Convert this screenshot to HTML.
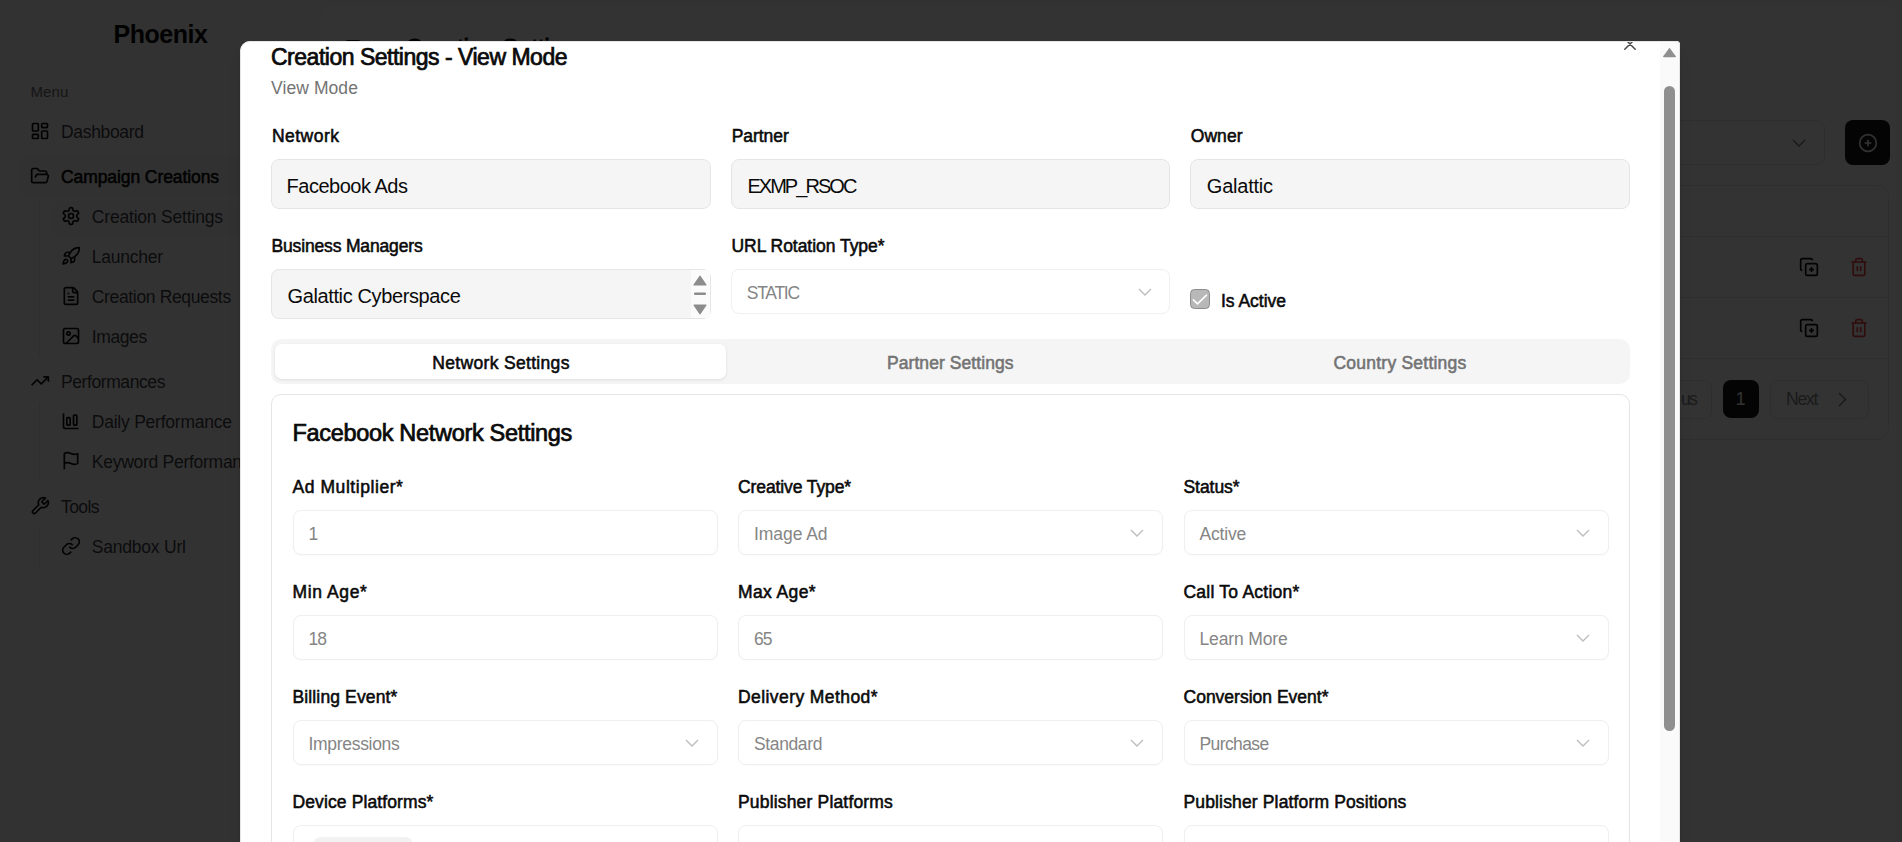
<!DOCTYPE html>
<html><head><meta charset="utf-8">
<style>
*{box-sizing:border-box;margin:0;padding:0}
html,body{width:1902px;height:842px;overflow:hidden;background:#fafafa;font-family:"Liberation Sans",sans-serif}
.t{position:absolute;white-space:nowrap;line-height:1}
.abs{position:absolute}
#bg{position:absolute;left:0;top:0;width:1902px;height:842px}
#overlay{position:absolute;left:0;top:0;width:1902px;height:842px;background:rgba(0,0,0,0.8)}
#modal{position:absolute;left:240px;top:41px;width:1440px;height:830px;background:#fff;box-shadow:0 10px 15px -3px rgba(0,0,0,.1),0 4px 6px -4px rgba(0,0,0,.1);border-radius:10px 4px 0 0;overflow:hidden}
#modal .brd{position:absolute;left:0;top:0;width:1440px;height:830px;border:1px solid #e5e5e5;border-radius:10px 4px 0 0;pointer-events:none}
.inp{position:absolute;border:1px solid #e5e5e5;border-radius:8px;background:#f5f5f5}
.sel{position:absolute;border:1px solid #f0f0f0;border-radius:8px;background:#fff}
.cin{position:absolute;border:1px solid #efefef;border-radius:8px;background:#fff;box-shadow:0 1px 2px rgba(0,0,0,.025)}
svg{display:block}
</style></head><body>
<div id="bg">
  <!-- main inset card -->
  <div class="abs" style="left:320px;top:5px;width:1577px;height:860px;background:#fff;border-radius:12px;box-shadow:0 1px 2px rgba(0,0,0,.08)"></div>
  <!-- header icon + separator -->
  <div class="abs" style="left:345px;top:40px;width:16px;height:16px;border:2px solid #0a0a0a;border-radius:3px"></div>
  <div class="abs" style="left:380px;top:38px;width:1px;height:20px;background:#e5e5e5"></div>
  <!-- sidebar active highlight -->
  <div class="abs" style="left:20px;top:156px;width:280px;height:40px;background:#f4f4f5;border-radius:8px"></div>
  <div class="abs" style="left:39px;top:198px;width:1px;height:158px;background:#e4e4e7"></div>
  <div class="abs" style="left:52px;top:201px;width:250px;height:36px;background:#f4f4f5;border-radius:8px"></div>
  <div class="abs" style="left:39px;top:403px;width:1px;height:78px;background:#e4e4e7"></div>
  <div class="abs" style="left:39px;top:528px;width:1px;height:38px;background:#e4e4e7"></div>
  <!-- sidebar icons -->
  <svg class="abs" style="left:30px;top:121px" width="20" height="20" viewBox="0 0 24 24" fill="none" stroke="#0a0a0a" stroke-width="2" stroke-linejoin="round"><rect x="3" y="3" width="7" height="9" rx="1"/><rect x="14" y="3" width="7" height="5" rx="1"/><rect x="14" y="12" width="7" height="9" rx="1"/><rect x="3" y="16" width="7" height="5" rx="1"/></svg>
  <svg class="abs" style="left:30px;top:166px" width="20" height="20" viewBox="0 0 24 24" fill="none" stroke="#0a0a0a" stroke-width="2" stroke-linejoin="round"><path d="m6 14 1.5-2.9A2 2 0 0 1 9.24 10H20a2 2 0 0 1 1.94 2.5l-1.54 6a2 2 0 0 1-1.95 1.5H4a2 2 0 0 1-2-2V5a2 2 0 0 1 2-2h3.9a2 2 0 0 1 1.69.9l.81 1.2a2 2 0 0 0 1.67.9H18a2 2 0 0 1 2 2v2"/></svg>
  <svg class="abs" style="left:61px;top:206px" width="20" height="20" viewBox="0 0 24 24" fill="none" stroke="#0a0a0a" stroke-width="2" stroke-linejoin="round"><path d="M12.22 2h-.44a2 2 0 0 0-2 2v.18a2 2 0 0 1-1 1.73l-.43.25a2 2 0 0 1-2 0l-.15-.08a2 2 0 0 0-2.73.73l-.22.38a2 2 0 0 0 .73 2.73l.15.1a2 2 0 0 1 1 1.72v.51a2 2 0 0 1-1 1.74l-.15.09a2 2 0 0 0-.73 2.73l.22.38a2 2 0 0 0 2.73.73l.15-.08a2 2 0 0 1 2 0l.43.25a2 2 0 0 1 1 1.73V20a2 2 0 0 0 2 2h.44a2 2 0 0 0 2-2v-.18a2 2 0 0 1 1-1.73l.43-.25a2 2 0 0 1 2 0l.15.08a2 2 0 0 0 2.73-.73l.22-.39a2 2 0 0 0-.73-2.73l-.15-.08a2 2 0 0 1-1-1.74v-.5a2 2 0 0 1 1-1.74l.15-.09a2 2 0 0 0 .73-2.73l-.22-.38a2 2 0 0 0-2.73-.73l-.15.08a2 2 0 0 1-2 0l-.43-.25a2 2 0 0 1-1-1.73V4a2 2 0 0 0-2-2z"/><circle cx="12" cy="12" r="3"/></svg>
  <svg class="abs" style="left:61px;top:246px" width="20" height="20" viewBox="0 0 24 24" fill="none" stroke="#0a0a0a" stroke-width="2" stroke-linejoin="round"><path d="M4.5 16.5c-1.5 1.26-2 5-2 5s3.74-.5 5-2c.71-.84.7-2.13-.09-2.91a2.18 2.18 0 0 0-2.91-.09z"/><path d="m12 15-3-3a22 22 0 0 1 2-3.95A12.88 12.88 0 0 1 22 2c0 2.72-.78 7.5-6 11a22.35 22.35 0 0 1-4 2z"/><path d="M9 12H4s.55-3.03 2-4c1.62-1.08 5 0 5 0"/><path d="M12 15v5s3.03-.55 4-2c1.08-1.62 0-5 0-5"/></svg>
  <svg class="abs" style="left:61px;top:286px" width="20" height="20" viewBox="0 0 24 24" fill="none" stroke="#0a0a0a" stroke-width="2" stroke-linejoin="round"><path d="M15 2H6a2 2 0 0 0-2 2v16a2 2 0 0 0 2 2h12a2 2 0 0 0 2-2V7Z"/><path d="M14 2v4a2 2 0 0 0 2 2h4"/><path d="M10 9H8"/><path d="M16 13H8"/><path d="M16 17H8"/></svg>
  <svg class="abs" style="left:61px;top:326px" width="20" height="20" viewBox="0 0 24 24" fill="none" stroke="#0a0a0a" stroke-width="2" stroke-linejoin="round"><rect width="18" height="18" x="3" y="3" rx="2"/><circle cx="9" cy="9" r="2"/><path d="m21 15-3.09-3.09a2 2 0 0 0-2.82 0L6 21"/></svg>
  <svg class="abs" style="left:30px;top:371px" width="20" height="20" viewBox="0 0 24 24" fill="none" stroke="#0a0a0a" stroke-width="2" stroke-linejoin="round"><polyline points="22 7 13.5 15.5 8.5 10.5 2 17"/><polyline points="16 7 22 7 22 13"/></svg>
  <svg class="abs" style="left:61px;top:411px" width="20" height="20" viewBox="0 0 24 24" fill="none" stroke="#0a0a0a" stroke-width="2" stroke-linejoin="round"><path d="M3 3v16a2 2 0 0 0 2 2h16"/><rect x="15" y="5" width="4" height="12" rx="1"/><rect x="7" y="8" width="4" height="9" rx="1"/></svg>
  <svg class="abs" style="left:61px;top:451px" width="20" height="20" viewBox="0 0 24 24" fill="none" stroke="#0a0a0a" stroke-width="2" stroke-linejoin="round"><path d="M4 15s1-1 4-1 5 2 8 2 4-1 4-1V3s-1 1-4 1-5-2-8-2-4 1-4 1z"/><line x1="4" x2="4" y1="22" y2="15"/></svg>
  <svg class="abs" style="left:30px;top:496px" width="20" height="20" viewBox="0 0 24 24" fill="none" stroke="#0a0a0a" stroke-width="2" stroke-linejoin="round"><path d="M14.7 6.3a1 1 0 0 0 0 1.4l1.6 1.6a1 1 0 0 0 1.4 0l3.77-3.77a6 6 0 0 1-7.94 7.94l-6.91 6.91a2.12 2.12 0 0 1-3-3l6.91-6.91a6 6 0 0 1 7.94-7.94l-3.76 3.76z"/></svg>
  <svg class="abs" style="left:61px;top:536px" width="20" height="20" viewBox="0 0 24 24" fill="none" stroke="#0a0a0a" stroke-width="2" stroke-linejoin="round"><path d="M10 13a5 5 0 0 0 7.54.54l3-3a5 5 0 0 0-7.07-7.07l-1.72 1.71"/><path d="M14 11a5 5 0 0 0-7.54-.54l-3 3a5 5 0 0 0 7.07 7.07l1.71-1.71"/></svg>
  <!-- right strip: select + plus button -->
  <div class="abs" style="left:1500px;top:120px;width:325px;height:45px;border:1px solid #e5e5e5;border-radius:8px;background:#fff"></div>
  <svg class="abs" style="left:1792px;top:139px" width="14" height="8" viewBox="0 0 14 8" fill="none" stroke="#0a0a0a" stroke-opacity=".5" stroke-width="1.5"><path d="M1 1l6 6 6-6"/></svg>
  <div class="abs" style="left:1845px;top:120px;width:45px;height:45px;border-radius:8px;background:#171717"></div>
  <svg class="abs" style="left:1858px;top:133px" width="20" height="20" viewBox="0 0 24 24" fill="none" stroke="#fafafa" stroke-width="2"><circle cx="12" cy="12" r="10"/><path d="M8 12h8M12 8v8"/></svg>
  <!-- table card -->
  <div class="abs" style="left:1300px;top:185px;width:589px;height:255px;border:1px solid #e5e5e5;border-radius:12px;background:#fff"></div>
  <div class="abs" style="left:1300px;top:236px;width:589px;height:1px;background:#e5e5e5"></div>
  <div class="abs" style="left:1300px;top:297px;width:589px;height:1px;background:#e5e5e5"></div>
  <div class="abs" style="left:1300px;top:358px;width:589px;height:1px;background:#e5e5e5"></div>
  <svg class="abs" style="left:1799px;top:257px" width="20" height="20" viewBox="0 0 24 24" fill="none" stroke="#0a0a0a" stroke-width="2" stroke-linejoin="round"><line x1="15" x2="15" y1="12" y2="18"/><line x1="12" x2="18" y1="15" y2="15"/><rect width="14" height="14" x="8" y="8" rx="2"/><path d="M4 16c-1.1 0-2-.9-2-2V4c0-1.1.9-2 2-2h10c1.1 0 2 .9 2 2"/></svg>
  <svg class="abs" style="left:1849px;top:257px" width="20" height="20" viewBox="0 0 24 24" fill="none" stroke="#ef4444" stroke-width="2" stroke-linejoin="round"><path d="M3 6h18"/><path d="M19 6v14c0 1-1 2-2 2H7c-1 0-2-1-2-2V6"/><path d="M8 6V4c0-1 1-2 2-2h4c1 0 2 1 2 2v2"/><line x1="10" x2="10" y1="11" y2="17"/><line x1="14" x2="14" y1="11" y2="17"/></svg>
  <svg class="abs" style="left:1799px;top:318px" width="20" height="20" viewBox="0 0 24 24" fill="none" stroke="#0a0a0a" stroke-width="2" stroke-linejoin="round"><line x1="15" x2="15" y1="12" y2="18"/><line x1="12" x2="18" y1="15" y2="15"/><rect width="14" height="14" x="8" y="8" rx="2"/><path d="M4 16c-1.1 0-2-.9-2-2V4c0-1.1.9-2 2-2h10c1.1 0 2 .9 2 2"/></svg>
  <svg class="abs" style="left:1849px;top:318px" width="20" height="20" viewBox="0 0 24 24" fill="none" stroke="#ef4444" stroke-width="2" stroke-linejoin="round"><path d="M3 6h18"/><path d="M19 6v14c0 1-1 2-2 2H7c-1 0-2-1-2-2V6"/><path d="M8 6V4c0-1 1-2 2-2h4c1 0 2 1 2 2v2"/><line x1="10" x2="10" y1="11" y2="17"/><line x1="14" x2="14" y1="11" y2="17"/></svg>
  <!-- pagination -->
  <div class="abs" style="left:1600px;top:380px;width:112px;height:39px;border:1px solid #e5e5e5;border-radius:8px"></div>
  <div class="abs" style="left:1723px;top:380px;width:36px;height:38px;border-radius:8px;background:#171717"></div>
  <div class="abs" style="left:1770px;top:380px;width:99px;height:39px;border:1px solid #e5e5e5;border-radius:8px"></div>
  <svg class="abs" style="left:1838px;top:392px" width="9" height="15" viewBox="0 0 9 15" fill="none" stroke="#0a0a0a" stroke-opacity=".5" stroke-width="1.5"><path d="M1 1l6.5 6.5L1 14"/></svg>
  <span class=t style="left:113.50px;top:22.14px;font-size:25px;font-weight:700;color:#0a0a0a;letter-spacing:-0.464px">Phoenix</span>
<span class=t style="left:30.50px;top:83.50px;font-size:15px;font-weight:400;color:#6b6b6b;letter-spacing:0.117px">Menu</span>
<span class=t style="left:61.00px;top:123.89px;font-size:17.5px;font-weight:400;color:#3f3f46;letter-spacing:-0.325px">Dashboard</span>
<span class=t style="left:61.00px;top:168.89px;font-size:17.5px;font-weight:400;color:#0a0a0a;letter-spacing:-0.085px;-webkit-text-stroke:0.55px #0a0a0a">Campaign Creations</span>
<span class=t style="left:91.80px;top:208.69px;font-size:17.5px;font-weight:400;color:#3f3f46;letter-spacing:-0.191px">Creation Settings</span>
<span class=t style="left:91.80px;top:248.69px;font-size:17.5px;font-weight:400;color:#3f3f46;letter-spacing:-0.248px">Launcher</span>
<span class=t style="left:91.80px;top:288.69px;font-size:17.5px;font-weight:400;color:#3f3f46;letter-spacing:-0.350px">Creation Requests</span>
<span class=t style="left:91.80px;top:328.69px;font-size:17.5px;font-weight:400;color:#3f3f46;letter-spacing:-0.398px">Images</span>
<span class=t style="left:61.00px;top:373.69px;font-size:17.5px;font-weight:400;color:#3f3f46;letter-spacing:-0.411px">Performances</span>
<span class=t style="left:91.80px;top:413.69px;font-size:17.5px;font-weight:400;color:#3f3f46;letter-spacing:-0.233px">Daily Performance</span>
<span class=t style="left:91.80px;top:453.69px;font-size:17.5px;font-weight:400;color:#3f3f46;letter-spacing:-0.271px">Keyword Performance</span>
<span class=t style="left:61.00px;top:498.69px;font-size:17.5px;font-weight:400;color:#3f3f46;letter-spacing:-0.572px">Tools</span>
<span class=t style="left:91.80px;top:538.69px;font-size:17.5px;font-weight:400;color:#3f3f46;letter-spacing:-0.210px">Sandbox Url</span>
<span class=t style="left:405.00px;top:36.34px;font-size:25px;font-weight:400;color:#0a0a0a;letter-spacing:-0.517px;-webkit-text-stroke:0.7857142857142858px #0a0a0a">Creation Settings</span>
<span class=t style="left:1681.00px;top:391.19px;font-size:17.5px;font-weight:400;color:#858585;letter-spacing:-1.742px">us</span>
<span class=t style="left:1735.63px;top:391.19px;font-size:17.5px;font-weight:500;color:#fafafa">1</span>
<span class=t style="left:1786.00px;top:391.19px;font-size:17.5px;font-weight:400;color:#858585;letter-spacing:-1.246px">Next</span>
</div>
<div id="overlay"></div>
<div id="modal">
  <!-- row 1 inputs -->
  <div class="inp" style="left:31px;top:118px;width:440px;height:50px"></div>
  <div class="inp" style="left:491px;top:118px;width:439px;height:50px"></div>
  <div class="inp" style="left:950px;top:118px;width:440px;height:50px"></div>
  <!-- business managers -->
  <div class="inp" style="left:31px;top:228px;width:440px;height:50px"></div>
  <!-- URL select -->
  <div class="sel" style="left:491px;top:228px;width:439px;height:45px"></div>
  <svg class="abs" style="left:897.5px;top:247px" width="14" height="8" viewBox="0 0 14 8" fill="none" stroke="#bdbdbd" stroke-width="1.4"><path d="M1 1l6 6 6-6"/></svg>
  <div class="abs" style="left:451px;top:229px;width:19px;height:48px;background:#fbfbfb"></div>
  <svg class="abs" style="left:453px;top:234px" width="14" height="40" viewBox="0 0 14 40" fill="#8c8c8c"><path d="M7 0.6 Q7.4 0.6 7.8 1.2 L13.4 9.4 Q14 10.6 12.8 10.6 L1.2 10.6 Q0 10.6 0.6 9.4 L6.2 1.2 Q6.6 0.6 7 0.6 Z"/><rect x="1" y="17.6" width="12" height="2.4" rx="1"/><path d="M7 39.4 Q7.4 39.4 7.8 38.8 L13.4 30.6 Q14 29.4 12.8 29.4 L1.2 29.4 Q0 29.4 0.6 30.6 L6.2 38.8 Q6.6 39.4 7 39.4 Z"/></svg>
  <!-- checkbox -->
  <div class="abs" style="left:950px;top:248px;width:20px;height:20px;border:1px solid #8c8c8c;border-radius:4.5px;background:#b8b8b8"></div>
  <svg class="abs" style="left:950px;top:248px" width="20" height="20" viewBox="0 0 20 20" fill="none" stroke="#fff" stroke-width="1.6" stroke-linecap="round" stroke-linejoin="round"><path d="M3.4 10.9 L7.5 14.8 L16.5 6.2"/></svg>
  <!-- tabs -->
  <div class="abs" style="left:31px;top:298px;width:1359px;height:45px;background:#f5f5f5;border-radius:10px"></div>
  <div class="abs" style="left:35px;top:303px;width:451px;height:35px;background:#fff;border-radius:7px;box-shadow:0 1px 3px rgba(0,0,0,.1)"></div>
  <!-- card -->
  <div class="abs" style="left:31px;top:353px;width:1359px;height:600px;border:1px solid #e5e5e5;border-radius:10px"></div>
  <div class="cin" style="left:52.5px;top:469px;width:425px;height:44.5px"></div>
<div class="cin" style="left:498.0px;top:469px;width:425px;height:44.5px"></div>
<svg class="abs" style="left:890.0px;top:488px" width="14" height="8" viewBox="0 0 14 8" fill="none" stroke="#bdbdbd" stroke-width="1.4"><path d="M1 1l6 6 6-6"/></svg>
<div class="cin" style="left:943.5px;top:469px;width:425px;height:44.5px"></div>
<svg class="abs" style="left:1335.5px;top:488px" width="14" height="8" viewBox="0 0 14 8" fill="none" stroke="#bdbdbd" stroke-width="1.4"><path d="M1 1l6 6 6-6"/></svg>
<div class="cin" style="left:52.5px;top:574px;width:425px;height:44.5px"></div>
<div class="cin" style="left:498.0px;top:574px;width:425px;height:44.5px"></div>
<div class="cin" style="left:943.5px;top:574px;width:425px;height:44.5px"></div>
<svg class="abs" style="left:1335.5px;top:593px" width="14" height="8" viewBox="0 0 14 8" fill="none" stroke="#bdbdbd" stroke-width="1.4"><path d="M1 1l6 6 6-6"/></svg>
<div class="cin" style="left:52.5px;top:679px;width:425px;height:44.5px"></div>
<svg class="abs" style="left:444.5px;top:698px" width="14" height="8" viewBox="0 0 14 8" fill="none" stroke="#bdbdbd" stroke-width="1.4"><path d="M1 1l6 6 6-6"/></svg>
<div class="cin" style="left:498.0px;top:679px;width:425px;height:44.5px"></div>
<svg class="abs" style="left:890.0px;top:698px" width="14" height="8" viewBox="0 0 14 8" fill="none" stroke="#bdbdbd" stroke-width="1.4"><path d="M1 1l6 6 6-6"/></svg>
<div class="cin" style="left:943.5px;top:679px;width:425px;height:44.5px"></div>
<svg class="abs" style="left:1335.5px;top:698px" width="14" height="8" viewBox="0 0 14 8" fill="none" stroke="#bdbdbd" stroke-width="1.4"><path d="M1 1l6 6 6-6"/></svg>
<div class="cin" style="left:52.5px;top:784px;width:425px;height:44.5px"></div>
<div class="cin" style="left:498.0px;top:784px;width:425px;height:44.5px"></div>
<div class="cin" style="left:943.5px;top:784px;width:425px;height:44.5px"></div>
<div class="abs" style="left:73px;top:796px;width:100px;height:30px;background:#f2f2f2;border-radius:8px"></div>
  <span class=t style="left:31.00px;top:4.73px;font-size:23px;font-weight:400;color:#0a0a0a;letter-spacing:-0.491px;-webkit-text-stroke:0.7228571428571429px #0a0a0a">Creation Settings - View Mode</span>
<span class=t style="left:31.00px;top:39.19px;font-size:17.5px;font-weight:400;color:#737373;letter-spacing:0.082px">View Mode</span>
<span class=t style="left:32.00px;top:87.19px;font-size:17.5px;font-weight:400;color:#0a0a0a;letter-spacing:0.459px;-webkit-text-stroke:0.55px #0a0a0a">Network</span>
<span class=t style="left:491.70px;top:87.19px;font-size:17.5px;font-weight:400;color:#0a0a0a;letter-spacing:-0.056px;-webkit-text-stroke:0.55px #0a0a0a">Partner</span>
<span class=t style="left:950.70px;top:87.19px;font-size:17.5px;font-weight:400;color:#0a0a0a;letter-spacing:0.091px;-webkit-text-stroke:0.55px #0a0a0a">Owner</span>
<span class=t style="left:46.50px;top:134.77px;font-size:20px;font-weight:400;color:#0a0a0a;letter-spacing:-0.479px">Facebook Ads</span>
<span class=t style="left:507.40px;top:134.77px;font-size:20px;font-weight:400;color:#0a0a0a;letter-spacing:-1.955px">EXMP_RSOC</span>
<span class=t style="left:966.80px;top:134.77px;font-size:20px;font-weight:400;color:#0a0a0a;letter-spacing:-0.227px">Galattic</span>
<span class=t style="left:31.50px;top:197.19px;font-size:17.5px;font-weight:400;color:#0a0a0a;letter-spacing:-0.159px;-webkit-text-stroke:0.55px #0a0a0a">Business Managers</span>
<span class=t style="left:491.50px;top:197.19px;font-size:17.5px;font-weight:400;color:#0a0a0a;letter-spacing:-0.039px;-webkit-text-stroke:0.55px #0a0a0a">URL Rotation Type*</span>
<span class=t style="left:47.50px;top:244.77px;font-size:20px;font-weight:400;color:#0a0a0a;letter-spacing:-0.373px">Galattic Cyberspace</span>
<span class=t style="left:506.80px;top:244.19px;font-size:17.5px;font-weight:400;color:#858585;letter-spacing:-1.273px">STATIC</span>
<span class=t style="left:981.00px;top:252.19px;font-size:17.5px;font-weight:400;color:#0a0a0a;letter-spacing:-0.019px;-webkit-text-stroke:0.55px #0a0a0a">Is Active</span>
<span class=t style="left:192.25px;top:314.19px;font-size:17.5px;font-weight:400;color:#0a0a0a;letter-spacing:0.326px;-webkit-text-stroke:0.55px #0a0a0a">Network Settings</span>
<span class=t style="left:647.00px;top:314.19px;font-size:17.5px;font-weight:400;color:#737373;letter-spacing:0.070px;-webkit-text-stroke:0.55px #737373">Partner Settings</span>
<span class=t style="left:1093.50px;top:314.19px;font-size:17.5px;font-weight:400;color:#737373;letter-spacing:0.227px;-webkit-text-stroke:0.55px #737373">Country Settings</span>
<span class=t style="left:52.40px;top:380.61px;font-size:23.5px;font-weight:400;color:#0a0a0a;letter-spacing:-0.310px;-webkit-text-stroke:0.7385714285714287px #0a0a0a">Facebook Network Settings</span>
<span class=t style="left:52.50px;top:438.19px;font-size:17.5px;font-weight:400;color:#0a0a0a;letter-spacing:0.564px;-webkit-text-stroke:0.55px #0a0a0a">Ad Multiplier*</span>
<span class=t style="left:68.50px;top:484.69px;font-size:17.5px;font-weight:400;color:#858585">1</span>
<span class=t style="left:498.00px;top:438.19px;font-size:17.5px;font-weight:400;color:#0a0a0a;letter-spacing:-0.105px;-webkit-text-stroke:0.55px #0a0a0a">Creative Type*</span>
<span class=t style="left:514.00px;top:484.69px;font-size:17.5px;font-weight:400;color:#858585;letter-spacing:-0.057px">Image Ad</span>
<span class=t style="left:943.50px;top:438.19px;font-size:17.5px;font-weight:400;color:#0a0a0a;letter-spacing:-0.062px;-webkit-text-stroke:0.55px #0a0a0a">Status*</span>
<span class=t style="left:959.50px;top:484.69px;font-size:17.5px;font-weight:400;color:#858585;letter-spacing:-0.176px">Active</span>
<span class=t style="left:52.50px;top:543.19px;font-size:17.5px;font-weight:400;color:#0a0a0a;letter-spacing:0.619px;-webkit-text-stroke:0.55px #0a0a0a">Min Age*</span>
<span class=t style="left:68.50px;top:589.69px;font-size:17.5px;font-weight:400;color:#858585;letter-spacing:-1.084px">18</span>
<span class=t style="left:498.00px;top:543.19px;font-size:17.5px;font-weight:400;color:#0a0a0a;letter-spacing:0.387px;-webkit-text-stroke:0.55px #0a0a0a">Max Age*</span>
<span class=t style="left:514.00px;top:589.69px;font-size:17.5px;font-weight:400;color:#858585;letter-spacing:-0.934px">65</span>
<span class=t style="left:943.50px;top:543.19px;font-size:17.5px;font-weight:400;color:#0a0a0a;letter-spacing:0.231px;-webkit-text-stroke:0.55px #0a0a0a">Call To Action*</span>
<span class=t style="left:959.50px;top:589.69px;font-size:17.5px;font-weight:400;color:#858585;letter-spacing:-0.150px">Learn More</span>
<span class=t style="left:52.50px;top:648.19px;font-size:17.5px;font-weight:400;color:#0a0a0a;letter-spacing:0.134px;-webkit-text-stroke:0.55px #0a0a0a">Billing Event*</span>
<span class=t style="left:68.50px;top:694.69px;font-size:17.5px;font-weight:400;color:#858585;letter-spacing:-0.304px">Impressions</span>
<span class=t style="left:498.00px;top:648.19px;font-size:17.5px;font-weight:400;color:#0a0a0a;letter-spacing:0.422px;-webkit-text-stroke:0.55px #0a0a0a">Delivery Method*</span>
<span class=t style="left:514.00px;top:694.69px;font-size:17.5px;font-weight:400;color:#858585;letter-spacing:-0.379px">Standard</span>
<span class=t style="left:943.50px;top:648.19px;font-size:17.5px;font-weight:400;color:#0a0a0a;letter-spacing:0.003px;-webkit-text-stroke:0.55px #0a0a0a">Conversion Event*</span>
<span class=t style="left:959.50px;top:694.69px;font-size:17.5px;font-weight:400;color:#858585;letter-spacing:-0.617px">Purchase</span>
<span class=t style="left:52.50px;top:753.19px;font-size:17.5px;font-weight:400;color:#0a0a0a;letter-spacing:0.113px;-webkit-text-stroke:0.55px #0a0a0a">Device Platforms*</span>
<span class=t style="left:498.00px;top:753.19px;font-size:17.5px;font-weight:400;color:#0a0a0a;letter-spacing:0.172px;-webkit-text-stroke:0.55px #0a0a0a">Publisher Platforms</span>
<span class=t style="left:943.50px;top:753.19px;font-size:17.5px;font-weight:400;color:#0a0a0a;letter-spacing:0.148px;-webkit-text-stroke:0.55px #0a0a0a">Publisher Platform Positions</span>
  <!-- scrollbar -->
  <div class="abs" style="left:1420px;top:0;width:20px;height:830px;background:#fafafa"></div>
  <div class="abs" style="left:1424px;top:45px;width:11px;height:645px;background:#8f8f8f;border-radius:6px"></div>
  <svg class="abs" style="left:1384px;top:-3.5px" width="12" height="12" viewBox="0 0 12 12" fill="none" stroke="#4a4a4a" stroke-width="1.5" stroke-linecap="round"><path d="M0.8 0.8 L11.2 11.2 M11.2 0.8 L0.8 11.2"/></svg>
  <svg class="abs" style="left:1422px;top:6px" width="15" height="11" viewBox="0 0 15 11" fill="#8f8f8f"><path d="M7.5 0.8 L13.8 9.2 Q14.3 10.2 13.2 10.2 L1.8 10.2 Q0.7 10.2 1.2 9.2 Z"/></svg>
  <div class="brd"></div>
</div>
</body></html>
